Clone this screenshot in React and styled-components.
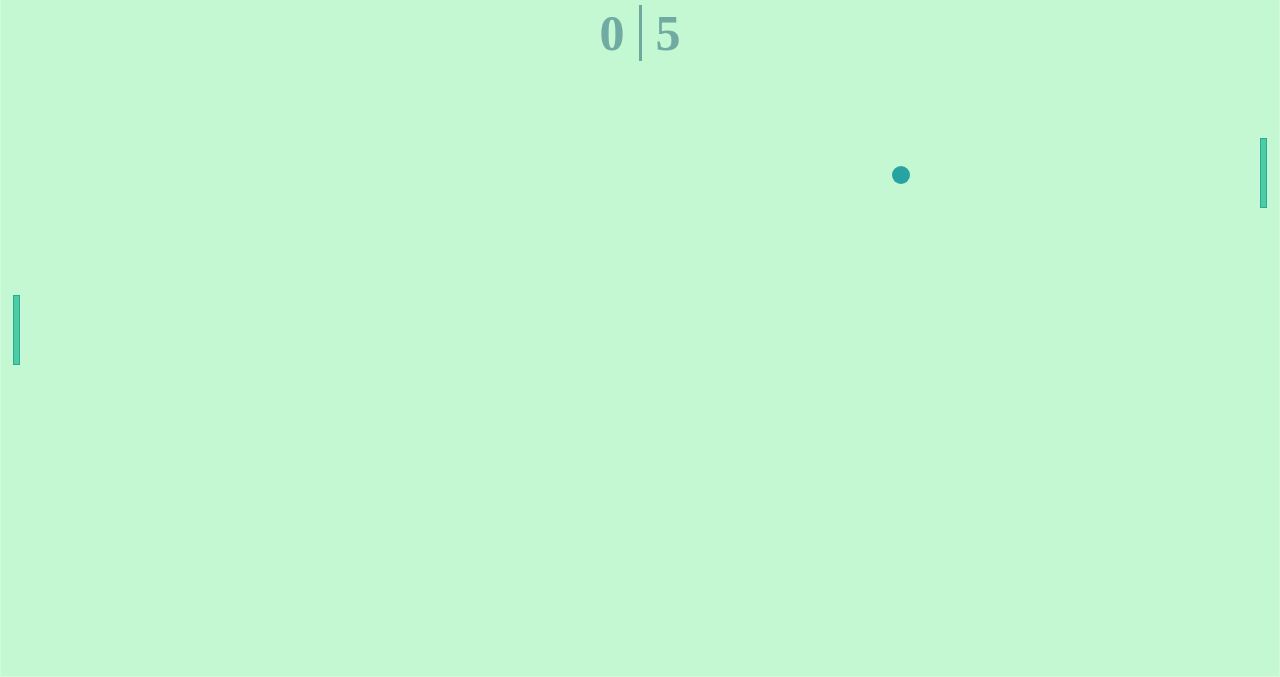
import React from 'react'
import styled, { createGlobalStyle } from 'styled-components'

const GlobalStyle = createGlobalStyle`
  html, body {
    margin: 0;
    padding: 0;
    background: #c4f8d2;
    overflow: hidden;
  }
`

const Court = styled.div`
  position: relative;
  box-sizing: border-box;
  width: 1280px;
  height: 677px;
  background: #c4f8d2;
  border: 1px solid #d2fadc;
  border-top: none;
  font-family: "Liberation Serif", "Times New Roman", serif;
`

const Scoreboard = styled.div`
  display: flex;
  justify-content: center;
  padding-top: 5px;
`

const Score = styled.span`
  width: 25px;
  text-align: center;
  font-size: 50px;
  font-weight: bold;
  line-height: 56px;
  color: #70aaa2;
  margin: ${p => (p.side === 'left' ? '0 14px 0 0' : '0 0 0 14px')};
`

const Divider = styled.div`
  width: 3px;
  height: 56px;
  background: #6ea8a0;
`

const Paddle = styled.div`
  position: absolute;
  box-sizing: border-box;
  width: 7px;
  height: 70px;
  background: #4bcca2;
  border: 1px solid #2ea899;
`

const Ball = styled.div`
  position: absolute;
  width: 18px;
  height: 18px;
  border-radius: 50%;
  background: #27a3a1;
`

const App = () => {
  const left = { x: 13, y: 295 }
  const right = { x: 1260, y: 138 }
  const ball = { x: 892, y: 166 }
  return (
    <Court>
      <GlobalStyle />
      <Scoreboard>
        <Score side="left">0</Score>
        <Divider />
        <Score side="right">5</Score>
      </Scoreboard>
      <Paddle style={{ left: left.x - 1, top: left.y }} />
      <Paddle style={{ left: right.x - 1, top: right.y }} />
      <Ball style={{ left: ball.x - 1, top: ball.y }} />
    </Court>
  )
}

export default App
